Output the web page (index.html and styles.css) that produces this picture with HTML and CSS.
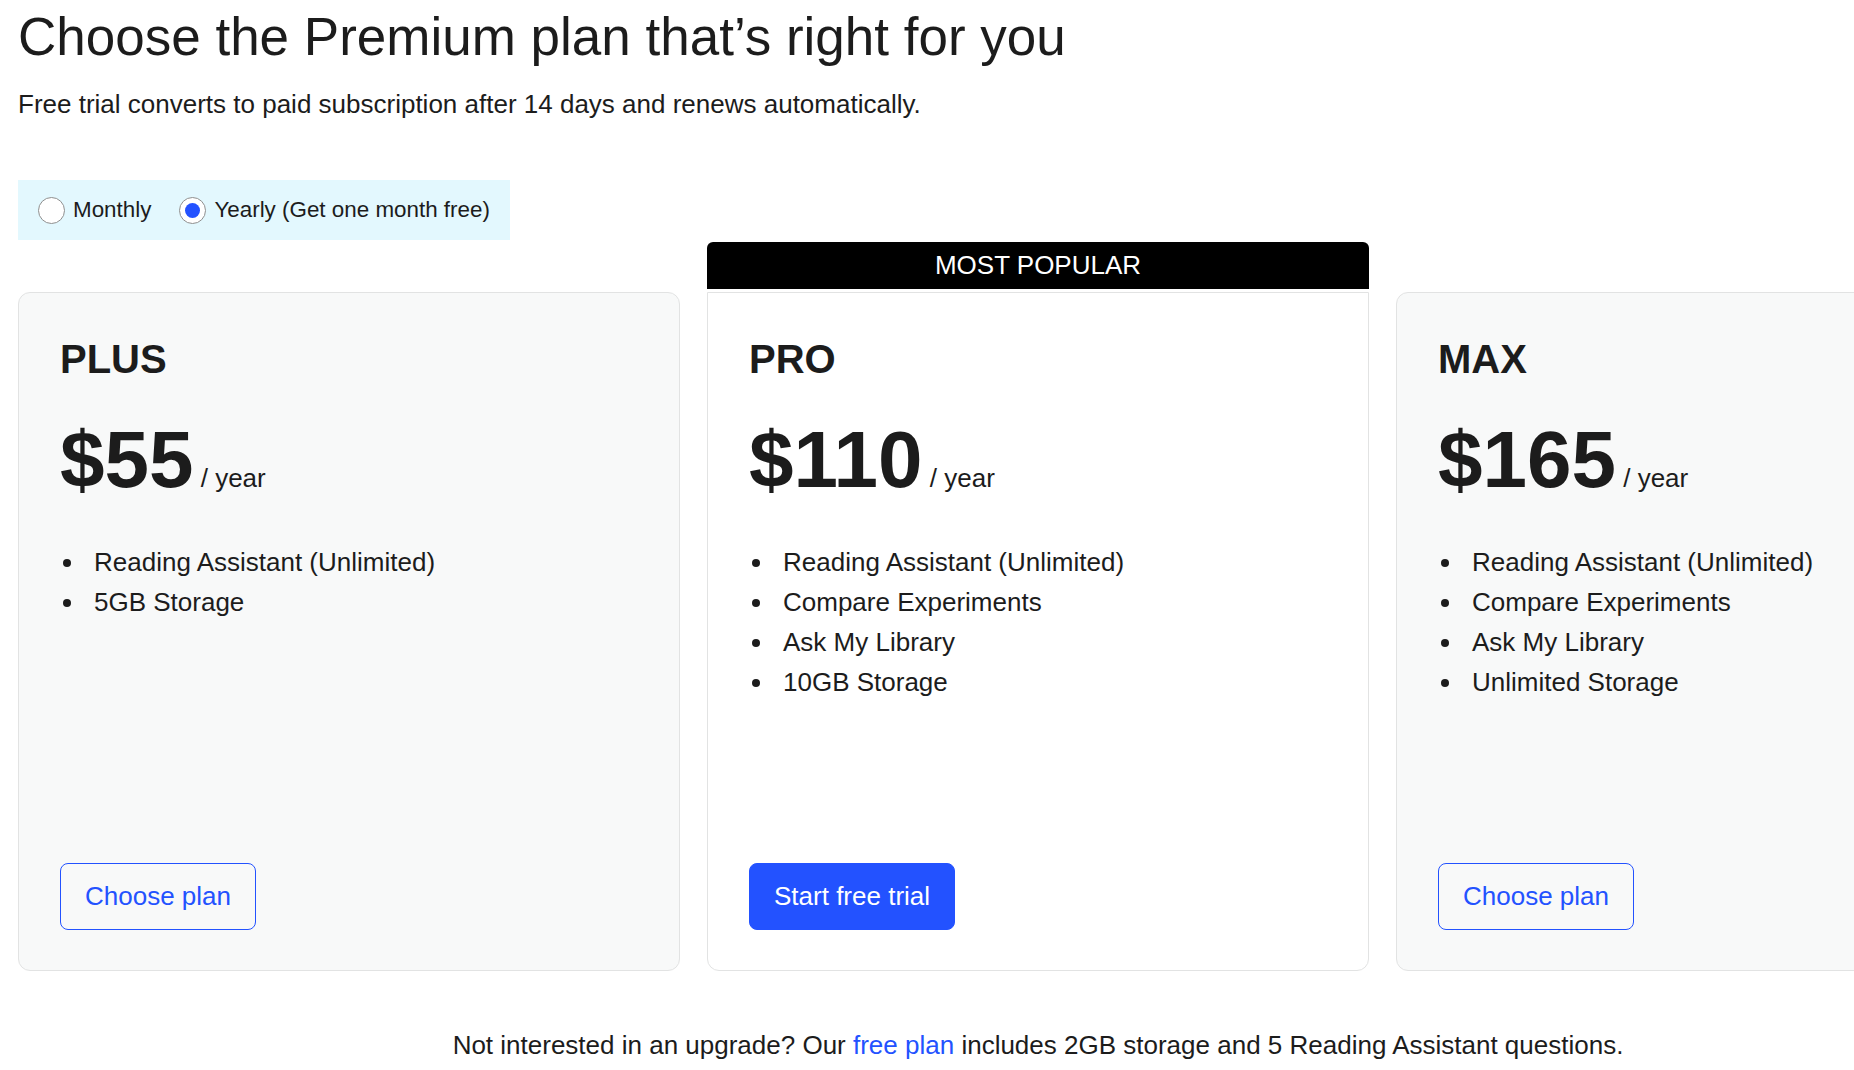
FILE: index.html
```html
<!DOCTYPE html>
<html lang="en">
<head>
<meta charset="utf-8">
<title>Choose the Premium plan</title>
<link rel="stylesheet" href="styles.css">
</head>
<body>
<main class="page">
  <h1 class="title">Choose the Premium plan that’s right for you</h1>
  <p class="subtitle">Free trial converts to paid subscription after 14 days and renews automatically.</p>

  <div class="billing">
    <label class="billing-option">
      <input type="radio" name="billing" class="radio">
      <span>Monthly</span>
    </label>
    <label class="billing-option">
      <input type="radio" name="billing" class="radio" checked>
      <span>Yearly (Get one month free)</span>
    </label>
  </div>

  <div class="plans">
    <section class="plan">
      <h2 class="plan-name">PLUS</h2>
      <div class="plan-price"><span class="amount">$55</span><span class="period"> / year</span></div>
      <ul class="features">
        <li>Reading Assistant (Unlimited)</li>
        <li>5GB Storage</li>
      </ul>
      <a class="btn btn-outline" href="#">Choose plan</a>
    </section>

    <section class="plan plan-featured">
      <div class="badge">MOST POPULAR</div>
      <h2 class="plan-name">PRO</h2>
      <div class="plan-price"><span class="amount">$110</span><span class="period"> / year</span></div>
      <ul class="features">
        <li>Reading Assistant (Unlimited)</li>
        <li>Compare Experiments</li>
        <li>Ask My Library</li>
        <li>10GB Storage</li>
      </ul>
      <a class="btn btn-solid" href="#">Start free trial</a>
    </section>

    <section class="plan">
      <h2 class="plan-name">MAX</h2>
      <div class="plan-price"><span class="amount">$165</span><span class="period"> / year</span></div>
      <ul class="features">
        <li>Reading Assistant (Unlimited)</li>
        <li>Compare Experiments</li>
        <li>Ask My Library</li>
        <li>Unlimited Storage</li>
      </ul>
      <a class="btn btn-outline" href="#">Choose plan</a>
    </section>
  </div>

  <p class="footnote">Not interested in an upgrade? Our <a href="#" class="link">free plan</a> includes 2GB storage and 5 Reading Assistant questions.</p>
</main>
</body>
</html>
```

FILE: styles.css
```css
html {
  overflow: hidden;
}

body {
  margin: 0;
  background: #ffffff;
  color: #1c1c1c;
  font-family: "Liberation Sans", Arial, Helvetica, sans-serif;
  font-size: 26px;
}

.page {
  width: 2040px;
  padding: 0 0 0 18px;
}

.title {
  margin: 6px 0 0;
  font-size: 53px;
  font-weight: 400;
  line-height: 61px;
  letter-spacing: 0;
}

.subtitle {
  margin: 22px 0 0;
  line-height: 30px;
}

.billing {
  display: inline-flex;
  align-items: center;
  gap: 28px;
  height: 60px;
  margin-top: 61px;
  padding: 0 20px;
  background: #e3f8fe;
  font-size: 22.4px;
}

.billing-option {
  display: inline-flex;
  align-items: center;
  gap: 8px;
}

.radio {
  appearance: none;
  -webkit-appearance: none;
  margin: 0;
  width: 27px;
  height: 27px;
  border: 1px solid #8f8f8f;
  border-radius: 50%;
  background: #ffffff;
  display: grid;
  place-items: center;
}

.radio:checked::before {
  content: "";
  width: 15px;
  height: 15px;
  border-radius: 50%;
  background: #2352ff;
}

.plans {
  display: grid;
  grid-template-columns: repeat(3, 662px);
  gap: 27px;
  margin-top: 52px;
}

.plan {
  position: relative;
  display: flex;
  flex-direction: column;
  align-items: flex-start;
  height: 679px;
  box-sizing: border-box;
  padding: 43px 41px 40px;
  background: #f8f9f9;
  border: 1px solid #e2e3e3;
  border-radius: 12px;
}

.plan-featured {
  background: #ffffff;
  border-top-left-radius: 0;
  border-top-right-radius: 0;
}

.badge {
  position: absolute;
  left: -1px;
  right: -1px;
  bottom: calc(100% + 4px);
  height: 47px;
  line-height: 47px;
  background: #000000;
  color: #ffffff;
  text-align: center;
  border-radius: 6px 6px 0 0;
}

.plan-name {
  margin: 0 0 32px;
  font-size: 40px;
  font-weight: 700;
  line-height: 46px;
}

.plan-price {
  line-height: 92px;
}

.amount {
  font-size: 80px;
  font-weight: 700;
}

.period {
  font-size: 26px;
}

.features {
  margin: 18px 0 0;
  padding-left: 26px;
  line-height: 40px;
  flex: 1;
}

.features li {
  padding-left: 8px;
}

.btn {
  display: inline-block;
  padding: 18px 24px;
  line-height: 29px;
  border-radius: 8px;
  border: 1px solid #2352ff;
  text-decoration: none;
}

.btn-outline {
  color: #2352ff;
  background: transparent;
}

.btn-solid {
  color: #ffffff;
  background: #2352ff;
}

.footnote {
  margin: 59px 0 0;
  text-align: center;
  line-height: 30px;
}

.link {
  color: #2352ff;
  text-decoration: none;
}
```
